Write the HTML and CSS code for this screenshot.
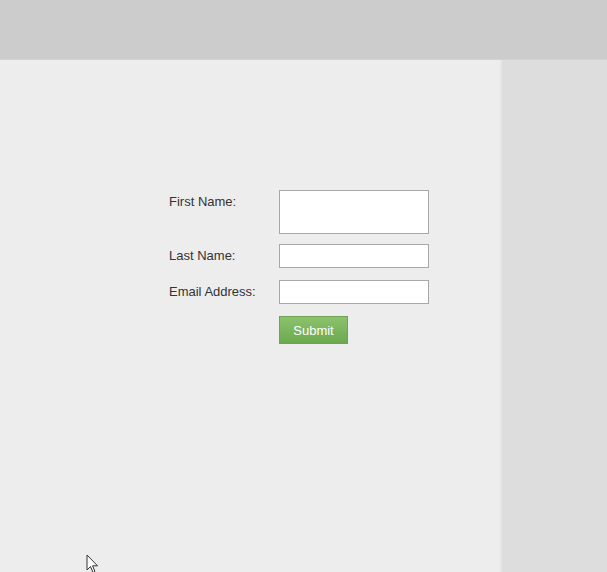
FILE: index.html
```html
<!DOCTYPE html>
<html lang="en">
<head>
    <meta charset="UTF-8">
    <title>Sign Up</title>
    <link rel="stylesheet" href="styles.css">
</head>
<body>
    <div class="header"></div>

    <div class="page">
        <div class="main">
            <form class="signup-form">
                <label class="first" for="firstName">First Name:</label>
                <textarea id="firstName"></textarea>

                <label for="lastName">Last Name:</label>
                <input type="text" id="lastName">

                <label for="email">Email Address:</label>
                <input type="text" id="email">

                <span></span>
                <button type="button">Submit</button>
            </form>
        </div>
        <div class="sidebar"></div>
    </div>

    <svg class="cursor" width="13" height="20" viewBox="0 0 13 20">
        <path d="M1 1 L1 16 L4.5 12.5 L7 18.5 L9 17.6 L6.6 11.8 L11.5 11.8 Z" fill="#fff" stroke="#333" stroke-width="1"/>
    </svg>
</body>
</html>
```

FILE: styles.css
```css
* {
    box-sizing: border-box;
    margin: 0;
    padding: 0;
}

body {
    font-family: "Liberation Sans", Arial, sans-serif;
    font-size: 13px;
    color: #333;
    background: #dddddd;
    height: 572px;
    overflow: hidden;
    position: relative;
}

.header {
    height: 60px;
    background: #cccccc;
    border-bottom: 1px solid #d3d3d3;
}

.page {
    display: flex;
    height: 512px;
}

.main {
    width: 500px;
    background: #ededed;
    padding: 130px 0 0 169px;
}

.sidebar {
    flex: 1;
    background: #dddddd;
    border-left: 2px solid #e6e6e6;
}

.signup-form {
    display: grid;
    grid-template-columns: 110px 150px;
    row-gap: 12px;
}

.signup-form label {
    padding-top: 4px;
    line-height: 15px;
}

.signup-form input,
.signup-form textarea {
    width: 150px;
    height: 24px;
    background: #fff;
    border: 1px solid #a8a8a8;
    font-family: inherit;
    font-size: 13px;
    resize: none;
}

.signup-form textarea {
    height: 44px;
    margin-bottom: -2px;
}

.signup-form .first {
    margin-bottom: -2px;
}

.signup-form button {
    width: 69px;
    height: 28px;
    background: linear-gradient(#8cc26c, #6ba94f);
    border: 1px solid #6da352;
    color: #fff;
    font-family: inherit;
    font-size: 13px;
}

.cursor {
    position: absolute;
    left: 86px;
    top: 554px;
}
```
